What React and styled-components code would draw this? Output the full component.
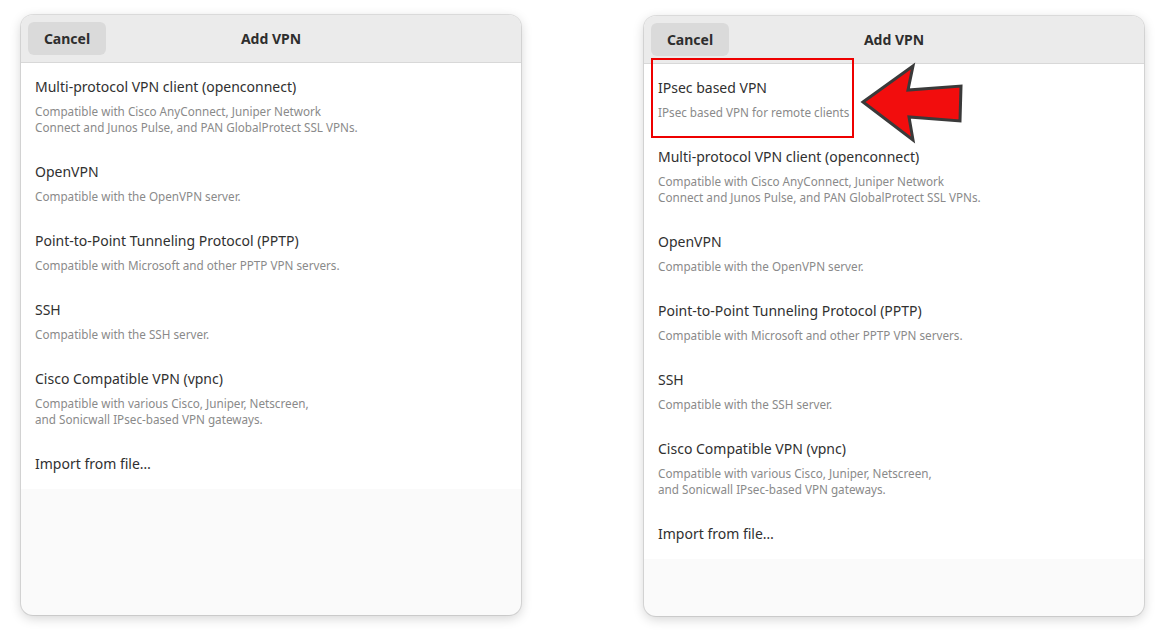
import styled, { createGlobalStyle } from "styled-components";

const Global = createGlobalStyle`
  html, body { margin: 0; padding: 0; background: #fff; }
  body { font-family: "Noto Sans", "Open Sans", sans-serif; }
`;

const Page = styled.div`
  width: 1164px;
  height: 644px;
  display: flex;
  align-items: flex-start;
  gap: 123px;
  padding: 15px 0 0 21px;
  box-sizing: border-box;
  overflow: hidden;
`;

const Dialog = styled.div`
  position: relative;
  width: 500px;
  height: 600px;
  margin-top: ${(p) => p.$offset || 0}px;
  border-radius: 12px;
  background: #fafafa;
  box-shadow: 0 0 0 1px rgba(0, 0, 0, 0.1), 0 3px 12px rgba(0, 0, 0, 0.18);
  display: flex;
  flex-direction: column;
`;

const Header = styled.div`
  height: 47px;
  flex-shrink: 0;
  background: #ebebeb;
  border-bottom: 1px solid #d8d8d8;
  border-radius: 12px 12px 0 0;
  display: flex;
  align-items: center;
  padding: 0 7px;
  position: relative;
`;

const CancelButton = styled.button`
  height: 33px;
  width: 78px;
  border: none;
  border-radius: 6px;
  background: #dadada;
  color: #2e2e2e;
  font-family: inherit;
  font-weight: 700;
  font-size: 14px;
`;

const Title = styled.div`
  position: absolute;
  left: 0;
  right: 0;
  text-align: center;
  font-weight: 700;
  font-size: 14px;
  color: #2e2e2e;
  pointer-events: none;
`;

const List = styled.div`
  background: #fff;
  display: flex;
  flex-direction: column;
`;

const Row = styled.div`
  padding: ${(p) => (p.$single ? "15px 14px 16px" : "15px 14px 13px")};
  display: flex;
  flex-direction: column;
`;

const RowTitle = styled.div`
  font-size: 14px;
  line-height: 18px;
  color: #303030;
`;

const RowDesc = styled.div`
  margin-top: 7px;
  font-size: 11.7px;
  line-height: 16px;
  color: #8a8a8a;
  white-space: pre-line;
`;

const Highlight = styled.div`
  position: absolute;
  left: 7px;
  top: 42px;
  width: 199px;
  height: 76px;
  border: 2px solid #ee0000;
`;

const Arrow = styled.svg`
  position: absolute;
  left: 210px;
  top: 44px;
`;

const baseItems = [
  {
    title: "Multi-protocol VPN client (openconnect)",
    desc: "Compatible with Cisco AnyConnect, Juniper Network\nConnect and Junos Pulse, and PAN GlobalProtect SSL VPNs.",
  },
  { title: "OpenVPN", desc: "Compatible with the OpenVPN server." },
  {
    title: "Point-to-Point Tunneling Protocol (PPTP)",
    desc: "Compatible with Microsoft and other PPTP VPN servers.",
  },
  { title: "SSH", desc: "Compatible with the SSH server." },
  {
    title: "Cisco Compatible VPN (vpnc)",
    desc: "Compatible with various Cisco, Juniper, Netscreen,\nand Sonicwall IPsec-based VPN gateways.",
  },
];

const ipsec = { title: "IPsec based VPN", desc: "IPsec based VPN for remote clients" };

const VpnDialog = ({ items, offset, children }) => (
  <Dialog $offset={offset}>
    <Header>
      <CancelButton>Cancel</CancelButton>
      <Title>Add VPN</Title>
    </Header>
    <List>
      {items.map((it) => (
        <Row key={it.title}>
          <RowTitle>{it.title}</RowTitle>
          <RowDesc>{it.desc}</RowDesc>
        </Row>
      ))}
      <Row $single>
        <RowTitle>Import from file…</RowTitle>
      </Row>
    </List>
    {children}
  </Dialog>
);

const App = () => (
  <>
    <Global />
    <Page>
      <VpnDialog items={baseItems} />
      <VpnDialog items={[ipsec, ...baseItems]} offset={1}>
        <Highlight />
        <Arrow width="110" height="84" viewBox="0 0 110 84">
          <path
            d="M9 42 L59 6 L54 30 L107 26 L106 61 L55 57 L59 80 Z"
            fill="#f20d0d"
            stroke="#3a3a3a"
            strokeWidth="3"
            strokeLinejoin="miter"
          />
        </Arrow>
      </VpnDialog>
    </Page>
  </>
);

export default App;
